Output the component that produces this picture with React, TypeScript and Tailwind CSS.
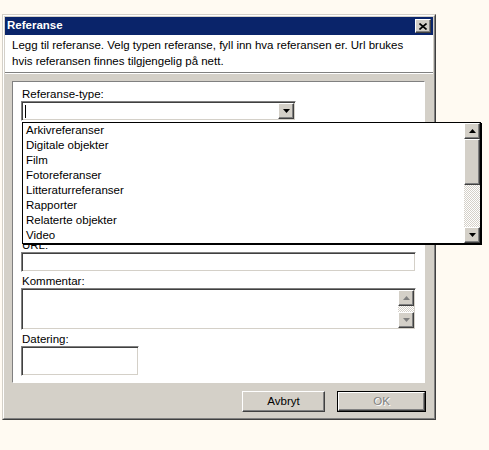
import React from "react";

const sunken =
  "border border-t-[#808080] border-l-[#808080] border-b-white border-r-white shadow-[inset_1px_1px_0_#404040,inset_-1px_-1px_0_#d4d0c8] bg-white";
const raised =
  "border border-t-white border-l-white border-b-[#404040] border-r-[#404040] shadow-[inset_-1px_-1px_0_#808080] bg-[#d4d0c8]";

function Arrow({ dir, color = "#000" }: { dir: "up" | "down"; color?: string }) {
  return (
    <svg width="7" height="4" viewBox="0 0 7 4">
      {dir === "up" ? (
        <polygon points="3.5,0 7,4 0,4" fill={color} />
      ) : (
        <polygon points="0,0 7,0 3.5,4" fill={color} />
      )}
    </svg>
  );
}

function ScrollBtn({ dir, disabled }: { dir: "up" | "down"; disabled?: boolean }) {
  return (
    <div className={`${raised} flex h-[16px] w-[16px] items-center justify-center`}>
      <Arrow dir={dir} color={disabled ? "#808080" : "#000"} />
    </div>
  );
}

const checker =
  "bg-[repeating-conic-gradient(#d4d0c8_0_25%,#ffffff_0_50%)] bg-[length:2px_2px]";

const items = [
  "Arkivreferanser",
  "Digitale objekter",
  "Film",
  "Fotoreferanser",
  "Litteraturreferanser",
  "Rapporter",
  "Relaterte objekter",
  "Video",
];

export default function App() {
  return (
    <div className="relative h-[450px] w-[489px] overflow-hidden bg-[#fffaf2] pl-[2px] pt-[14px] font-['Liberation_Sans',Arial,sans-serif] text-[11.5px] text-black">
      {/* dialog */}
      <div className="h-[406px] w-[434px] border border-t-[#d4d0c8] border-l-[#d4d0c8] border-b-[#404040] border-r-[#404040]">
        <div className="flex h-full flex-col border border-t-white border-l-white border-b-[#808080] border-r-[#808080] bg-[#d4d0c8] p-[1px]">
          <div className="flex h-[18px] items-center justify-between bg-[#0a246a] pl-[2px] pr-[2px]">
            <span className="text-[11.5px] font-bold text-white">Referanse</span>
            <div className={`${raised} flex h-[14px] w-[16px] items-center justify-center`}>
              <svg width="8" height="7" viewBox="0 0 8 7">
                <path d="M0.5 0.5 L7.5 6.5 M7.5 0.5 L0.5 6.5" stroke="#000" strokeWidth="1.6" />
              </svg>
            </div>
          </div>
          <div className="h-[37px] bg-white px-[7px] pt-[2px] leading-[16px]">
            Legg til referanse. Velg typen referanse, fyll inn hva referansen er. Url brukes
            <br />
            hvis referansen finnes tilgjengelig på nett.
          </div>
          <div className="h-[2px] border-t border-t-[#808080] border-b border-b-white" />
          <div className="flex flex-1 flex-col px-[7px] pt-[7px]">
            <div className="flex h-[302px] w-[413px] flex-col border border-t-[#808080] border-l-[#808080] border-b-white border-r-white bg-white px-[8px] leading-[13px]">
              <div className="mt-[6px] pl-[1px]">Referanse-type:</div>
              <div className={`${sunken} flex h-[20px] w-[275px] items-center justify-between p-[1px]`}>
                <div className="ml-[2px] h-[13px] w-[1px] bg-black" />
                <div className={`${raised} flex h-[16px] w-[16px] items-center justify-center`}>
                  <Arrow dir="down" />
                </div>
              </div>
              <div className="h-[118px]" />
              <div className="pl-[1px]">URL:</div>
              <div className={`${sunken} h-[20px] w-[395px]`} />
              <div className="mt-[3px] pl-[1px]">Kommentar:</div>
              <div className={`${sunken} flex h-[42px] w-[395px] justify-end p-[1px]`}>
                <div className="flex w-[16px] flex-col">
                  <ScrollBtn dir="up" disabled />
                  <div className={`flex-1 ${checker}`} />
                  <ScrollBtn dir="down" disabled />
                </div>
              </div>
              <div className="mt-[3px] pl-[1px]">Datering:</div>
              <div className={`${sunken} h-[30px] w-[118px]`} />
            </div>
            <div className="mt-[8px] flex justify-end gap-[12px]">
              <div className={`${raised} flex h-[21px] w-[83px] items-center justify-center`}>
                Avbryt
              </div>
              <div className="h-[21px] w-[89px] border border-black">
                <div className={`${raised} flex h-full w-full items-center justify-center text-[#808080] [text-shadow:1px_1px_0_#fff]`}>
                  OK
                </div>
              </div>
            </div>
          </div>
        </div>
      </div>

      {/* open dropdown list */}
      <div className="absolute left-[22px] top-[122px] flex h-[122px] w-[459px] border border-black bg-white shadow-[1px_1px_0_#000]">
        <div className="flex-1 pl-[3px] leading-[15px]">
          {items.map((it) => (
            <div key={it} className="h-[15px]">
              {it}
            </div>
          ))}
        </div>
        <div className="flex w-[16px] flex-col">
          <ScrollBtn dir="up" />
          <div className={`${raised} h-[46px] w-[16px]`} />
          <div className={`flex-1 ${checker}`} />
          <ScrollBtn dir="down" />
        </div>
      </div>
    </div>
  );
}
